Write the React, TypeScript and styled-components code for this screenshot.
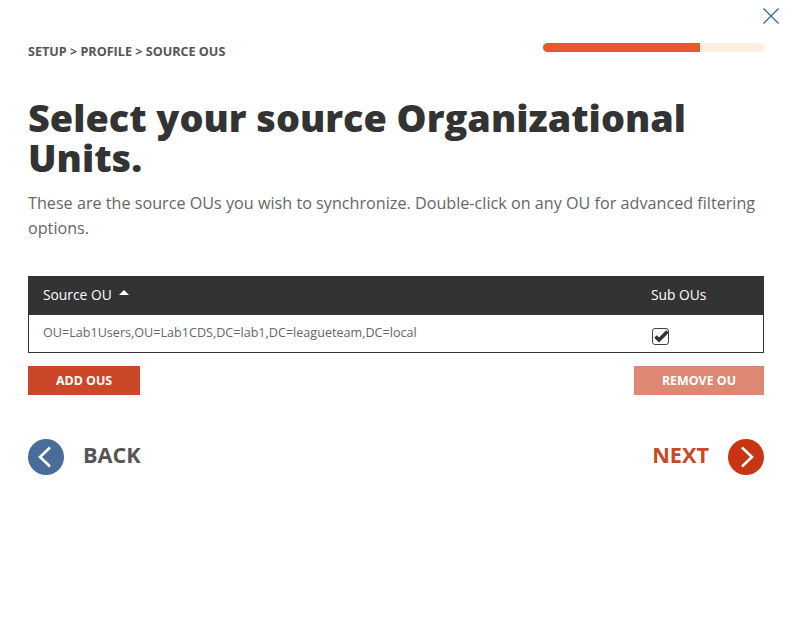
import React from 'react'
import styled, { createGlobalStyle } from 'styled-components'

const GlobalStyle = createGlobalStyle`
  html, body {
    margin: 0;
    padding: 0;
    background: #fff;
    font-family: "Open Sans", "Noto Sans", sans-serif;
  }
`

const Page = styled.div`
  width: 794px;
  height: 628px;
  box-sizing: border-box;
  padding: 0 30px 0 28px;
  position: relative;
  overflow: hidden;
`

const CloseButton = styled.button`
  position: absolute;
  top: 7px;
  right: 14px;
  width: 18px;
  height: 18px;
  padding: 0;
  border: none;
  background: none;
  color: #2f6a94;
`

const TopBar = styled.div`
  display: flex;
  justify-content: space-between;
  align-items: flex-start;
  padding-top: 43px;
`

const Breadcrumb = styled.div`
  font-size: 12.6px;
  line-height: 17px;
  font-weight: 700;
  color: #555;
`

const Progress = styled.div`
  width: 221px;
  height: 9px;
  border-radius: 5px;
  background: #fdeee0;
  overflow: hidden;
`

const ProgressFill = styled.div`
  height: 100%;
  background: #e9572c;
`

const Title = styled.h1`
  margin: 38px 0 0;
  font-size: 37.8px;
  line-height: 40px;
  font-weight: 800;
  color: #333;
`

const Intro = styled.p`
  margin: 13px 0 0;
  font-size: 16.18px;
  line-height: 25px;
  color: #666;
`

const Table = styled.div`
  margin-top: 35px;
  border: 1px solid #333;
`

const Row = styled.div`
  display: grid;
  grid-template-columns: 1fr 112px;
  align-items: center;
  box-sizing: border-box;
`

const HeadRow = styled(Row)`
  height: 38px;
  padding-bottom: 4px;
  background: #333;
  color: #fff;
  font-size: 13.8px;
`

const BodyRow = styled(Row)`
  height: 37px;
  padding-bottom: 2px;
  color: #666;
  font-size: 12.6px;
`

const Cell = styled.div`
  padding-left: 14px;
  display: flex;
  align-items: center;
`

const SubCell = styled.div`
  display: flex;
  align-items: center;
`

const SortArrow = styled.span`
  width: 0;
  height: 0;
  margin: 0 0 3px 7px;
  border-left: 5px solid transparent;
  border-right: 5px solid transparent;
  border-bottom: 5px solid #fff;
`

const CheckBox = styled.span`
  width: 17px;
  height: 17px;
  margin: 8px 0 0 1px;
  box-sizing: border-box;
  border: 1px solid #444;
  border-radius: 3px;
  position: relative;
  background: #fff;

  svg {
    position: absolute;
    left: 0;
    top: -1px;
  }
`

const Actions = styled.div`
  display: flex;
  justify-content: space-between;
  margin-top: 13px;
`

const ActionButton = styled.button<{ $faded?: boolean; $width: number }>`
  width: ${p => p.$width}px;
  height: 29px;
  padding: 0;
  border: none;
  background: ${p => (p.$faded ? '#de8873' : '#cb4727')};
  color: #fff;
  font-family: inherit;
  font-size: 12.4px;
  font-weight: 700;
`

const Nav = styled.div`
  display: flex;
  justify-content: space-between;
  margin-top: 44px;
`

const NavLink = styled.div<{ $color: string }>`
  display: flex;
  align-items: center;
  gap: 19px;
  color: ${p => p.$color};
  font-size: 21.7px;
  font-weight: 700;
`

const NavLabel = styled.span`
  padding-bottom: 6px;
`

const NavCircle = styled.span<{ $color: string }>`
  width: 36px;
  height: 36px;
  border-radius: 50%;
  background: ${p => p.$color};
  display: flex;
  align-items: center;
  justify-content: center;
`

const App = () => {
  return (
    <Page>
      <GlobalStyle />
      <CloseButton aria-label="Close">
        <svg width="18" height="18" viewBox="0 0 18 18" fill="none" stroke="currentColor" strokeWidth="1.3">
          <path d="M1.5 1.5l15 15M16.5 1.5l-15 15" />
        </svg>
      </CloseButton>
      <TopBar>
        <Breadcrumb>SETUP &gt; PROFILE &gt; SOURCE OUS</Breadcrumb>
        <Progress>
          <ProgressFill style={{ width: `${(157 / 221) * 100}%` }} />
        </Progress>
      </TopBar>
      <Title>Select your source Organizational Units.</Title>
      <Intro>These are the source OUs you wish to synchronize. Double-click on any OU for advanced filtering options.</Intro>
      <Table>
        <HeadRow>
          <Cell>
            Source OU
            <SortArrow />
          </Cell>
          <SubCell>Sub OUs</SubCell>
        </HeadRow>
        <BodyRow>
          <Cell>OU=Lab1Users,OU=Lab1CDS,DC=lab1,DC=leagueteam,DC=local</Cell>
          <SubCell>
            <CheckBox>
              <svg width="17" height="17" viewBox="0 0 17 17" fill="none" stroke="#333" strokeWidth="3.6">
                <path d="M2.5 8.5l3.5 3.5 8.5-8.5" />
              </svg>
            </CheckBox>
          </SubCell>
        </BodyRow>
      </Table>
      <Actions>
        <ActionButton $width={112}>ADD OUS</ActionButton>
        <ActionButton $width={130} $faded>
          REMOVE OU
        </ActionButton>
      </Actions>
      <Nav>
        <NavLink $color="#555">
          <NavCircle $color="#4a6c99">
            <svg width="36" height="36" viewBox="0 0 36 36" fill="none" stroke="#fff" strokeWidth="2.6">
              <path d="M22 8.5l-10 9.5 10 9.5" />
            </svg>
          </NavCircle>
          <NavLabel>BACK</NavLabel>
        </NavLink>
        <NavLink $color="#cb4727">
          <NavLabel>NEXT</NavLabel>
          <NavCircle $color="#c93512">
            <svg width="36" height="36" viewBox="0 0 36 36" fill="none" stroke="#fff" strokeWidth="2.6">
              <path d="M14 8.5l10 9.5-10 9.5" />
            </svg>
          </NavCircle>
        </NavLink>
      </Nav>
    </Page>
  )
}

export default App
